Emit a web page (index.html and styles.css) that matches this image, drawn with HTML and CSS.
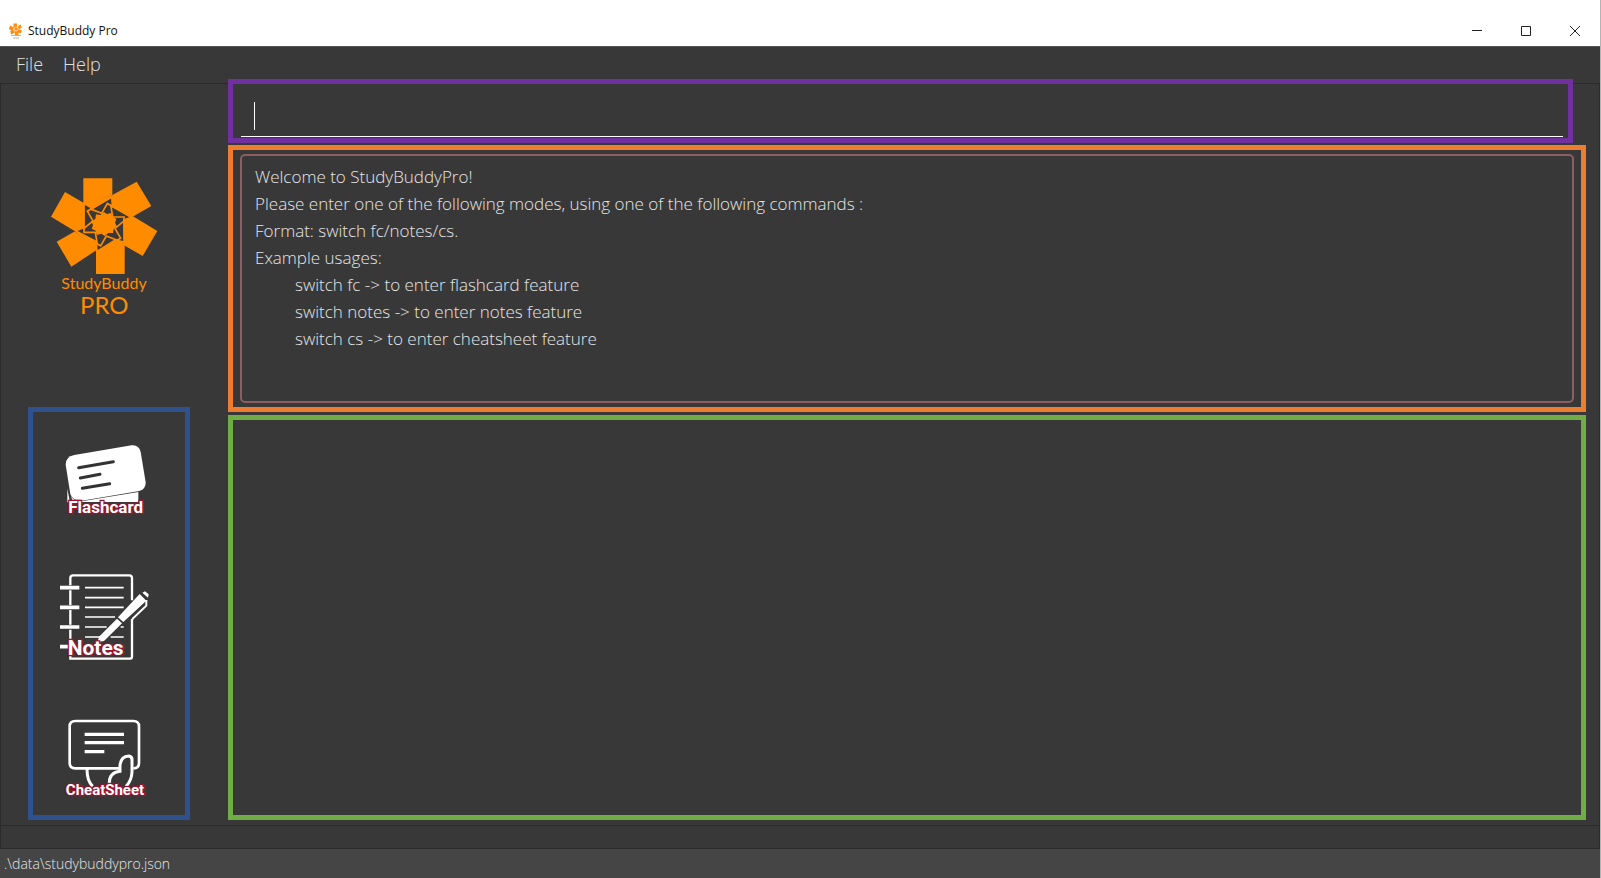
FILE: index.html
```html
<!DOCTYPE html>
<html lang="en">
<head>
<meta charset="utf-8">
<title>StudyBuddy Pro</title>
<link rel="stylesheet" href="styles.css">
</head>
<body>
<div class="window">
  <header class="titlebar">
    <svg class="app-icon" viewBox="0 0 14 16" aria-hidden="true">
      <g fill="#ff8c0a">
        <path d="M4.500 .5h3.500v4h-3.500zM6 8h3.500v4h-3.500zM1 2.500l4 2-2 3.500-3-2zM9 3l2.500-1.500 1.500 3-3.500 2zM9 6l4 1.500-1.500 3-3.500-2zM1 8.500l3.500-2 1.500 3-3.500 2z"/>
        <circle cx="7" cy="6" r="2.500" fill="#f7c48c"/>
        <circle cx="7" cy="6" r="1.300"/>
      </g>
      <path d="M2 12.500h10M4 15h6" stroke="#c9b29a"/>
    </svg>
    <h1 class="title">StudyBuddy Pro</h1>
    <div class="controls">
      <button class="control" aria-label="Minimize"><svg viewBox="0 0 12 12"><path d="M1 5.500h10"/></svg></button>
      <button class="control" aria-label="Maximize"><svg viewBox="0 0 12 12"><path d="M1.500 1.500h9v9h-9z"/></svg></button>
      <button class="control" aria-label="Close"><svg viewBox="0 0 12 12"><path d="M1 1l10 10M11 1L1 11"/></svg></button>
    </div>
  </header>

  <nav class="menubar">
    <button class="menu">File</button>
    <button class="menu">Help</button>
  </nav>

  <div class="body">
    <aside class="sidebar">
      <svg class="logo" viewBox="0 0 390 450" role="img" aria-label="StudyBuddy Pro">
        <g fill="#ff8c00">
          <path d="M130 25H217V76L130 106Z"/>
          <path d="M217 75L290 35L334 108L275 142L217 78Z"/>
          <path d="M279 139L352 183L308 258L252 226V150Z"/>
          <path d="M254 225V312H168V241Z"/>
          <path d="M50 215L105 184L170 240L94 290Z"/>
          <path d="M75 66L133 100V165L105 184L33 140Z"/>
          <path d="M130 103L217 76L277 141L252 170V228L168 242L105 184Z"/>
        </g>
        <path fill="#383838" d="M133 104L158 118L213 84L215 112L272 140L249 148L252 214L226 207L173 240L171 213L113 183L134 174Z"/>
        <g fill="none" stroke="#ff8c00" stroke-width="5">
          <g id="arm"><path d="M132 105V187H166L172 224"/></g>
          <use href="#arm" transform="rotate(60 192 164)"/>
          <use href="#arm" transform="rotate(120 192 164)"/>
          <use href="#arm" transform="rotate(180 192 164)"/>
          <use href="#arm" transform="rotate(240 192 164)"/>
          <use href="#arm" transform="rotate(300 192 164)"/>
        </g>
        <path fill="#ff8c00" d="M192 126L200 132L214 129L217 141L229 146L225 158L230 168L221 176L219 189L205 189L194 198L184 191L170 195L167 182L155 176L159 165L154 154L166 147L168 133L181 135Z"/>
        <text class="logo-name" x="192" y="356">StudyBuddy</text>
        <text class="logo-pro" x="193" y="431">PRO</text>
      </svg>

      <div class="modes">
        <button class="mode">
          <svg viewBox="0 0 270 240" role="img" aria-label="Flashcard">
            <g transform="translate(-120 -110)">
              <path d="M142 262L150 303H142ZM152 285L160 302H355V272L190 299Q160 300 152 285Z" fill="#fff"/>
              <path d="M163 161L335 132Q357 130 362 152L377 243Q378 263 358 269L185 298Q157 298 151 278L137 190Q136 167 163 161Z" fill="#fff"/>
              <path d="M176 199L280 181M181 230L240 219M187 261L269 247" stroke="#333" stroke-width="9" stroke-linecap="round"/>
              <text class="label label-flash" x="257" y="336">Flashcard</text>
            </g>
          </svg>
        </button>
        <button class="mode">
          <svg viewBox="0 0 270 270" role="img" aria-label="Notes">
            <g transform="translate(-120 -35)">
              <path d="M151 75V53Q151 45 159 45H328Q336 45 336 53V120M336 176V289Q336 295 328 295H151V265M151 90V134M151 149V193M151 208V252" fill="none" stroke="#fff" stroke-width="7"/>
              <path d="M120 82H178M120 141H178M120 200H178M120 259H160" stroke="#fff" stroke-width="11"/>
              <path d="M195 82H311M195 112H311M195 141H311M195 170H285M195 200H260M195 230H240M272 230H311M302 200H311" stroke="#fff" stroke-width="5"/>
              <path d="M359 101L379 121L310 185L294 171ZM291 175L306 189L252 242L233 245L237 229ZM367 97L375 93L386 102L384 112Z" fill="#fff"/>
              <path d="M379 119V136L337 176" fill="none" stroke="#fff" stroke-width="6"/>
              <text class="label label-notes" x="227" y="283">Notes</text>
            </g>
          </svg>
        </button>
        <button class="mode">
          <svg viewBox="0 0 270 250" role="img" aria-label="CheatSheet">
            <g transform="translate(-120 -50)">
              <path d="M300 204H166Q149 204 149 188V78Q149 62 166 62H340Q357 62 357 78V188Q357 204 340 204" fill="none" stroke="#fff" stroke-width="8"/>
              <path d="M194 102H312M194 127H312M194 154H253" stroke="#fff" stroke-width="10"/>
              <path d="M201 206Q201 242 218 258M268 250Q267 217 300 213V195Q303 168 326 167Q337 168 336 180V215Q335 241 318 258" fill="none" stroke="#fff" stroke-width="9"/>
              <text class="label label-cheat" x="255" y="285">CheatSheet</text>
            </g>
          </svg>
        </button>
      </div>
    </aside>

    <main class="content">
      <div class="command">
        <input class="command-input" type="text" aria-label="Command">
        <span class="caret"></span>
      </div>
      <section class="result">
        <div class="result-text">
          <p>Welcome to StudyBuddyPro!</p>
          <p>Please enter one of the following modes, using one of the following commands :</p>
          <p>Format: switch fc/notes/cs.</p>
          <p>Example usages:</p>
          <p class="indent">switch fc -&gt; to enter flashcard feature</p>
          <p class="indent">switch notes -&gt; to enter notes feature</p>
          <p class="indent">switch cs -&gt; to enter cheatsheet feature</p>
        </div>
      </section>
      <section class="panel"></section>
    </main>
  </div>

  <div class="strip"></div>
  <footer class="status">.\data\studybuddypro.json</footer>
</div>
</body>
</html>
```

FILE: styles.css
```css
* { box-sizing: border-box; }

body {
  margin: 0;
  background: #383838;
  font-family: "Open Sans", "Noto Sans", sans-serif;
}

button {
  border: 0;
  padding: 0;
  background: none;
  font: inherit;
  color: inherit;
}

.window {
  display: flex;
  flex-direction: column;
  min-height: 100vh;
  border-right: 1px solid #b4b4b4;
}

.titlebar {
  display: flex;
  align-items: center;
  height: 46px;
  padding: 15px 1px 0 9px;
  background: #fff;
}

.app-icon { width: 14px; height: 16px; margin-right: 5px; }

.title {
  flex: 1;
  margin: 0;
  font-size: 12px;
  font-weight: 400;
  color: #111;
}

.controls { display: flex; }

.control {
  display: flex;
  align-items: center;
  justify-content: center;
  width: 49px;
  height: 30px;
}

.control svg {
  width: 12px;
  height: 12px;
  fill: none;
  stroke: #222;
}

.menubar {
  display: flex;
  gap: 20px;
  height: 37px;
  padding: 0 16px 2px;
  border-top: 1px solid #555;
  font-size: 18px;
  font-weight: 300;
  color: #e0e0e0;
}

.body {
  display: flex;
  flex: 1;
  padding: 0 13px 5px 0;
  border: 1px solid #2b2b2b;
  border-bottom-width: 0;
}

.sidebar {
  display: flex;
  flex-direction: column;
  flex: none;
  width: 227px;
  padding: 86px 38px 0 27px;
}

.logo { width: 130px; height: 150px; margin-left: 12px; }

.logo text {
  fill: #ff8c00;
  font-family: Lato, sans-serif;
  text-anchor: middle;
}

.logo-name { font-size: 48px; }
.logo-pro { font-size: 72px; }

.modes {
  display: flex;
  flex-direction: column;
  flex: 1;
  justify-content: space-between;
  margin-top: 87px;
  padding: 26px 27px 15px;
  border: 5px solid #2f528f;
}

.mode { display: block; }
.mode svg { display: block; width: 90px; overflow: visible; }

.label {
  font-family: Roboto, sans-serif;
  font-weight: 700;
  text-anchor: middle;
  fill: #fff;
  stroke: #96142d;
  stroke-width: 8px;
  paint-order: stroke;
}

.label-flash { font-size: 51px; }
.label-notes { font-size: 63px; }
.label-cheat { font-size: 45px; }

.content {
  display: flex;
  flex-direction: column;
  flex: 1;
}

.command {
  position: relative;
  height: 64px;
  margin: -5px 13px 2px 0;
  padding: 8px 5px 1px 8px;
  border: 5px solid #7030a0;
  background: #383838;
}

.command-input {
  display: block;
  width: 100%;
  height: 45px;
  padding: 0 12px;
  border: 0;
  border-bottom: 1px solid #fff;
  outline: 0;
  background: transparent;
  font: 300 18px "Open Sans", sans-serif;
  color: #fff;
}

.caret {
  position: absolute;
  top: 18px;
  left: 21px;
  width: 1px;
  height: 28px;
  background: #fff;
}

.result {
  display: flex;
  min-height: 267px;
  margin-bottom: 3px;
  padding: 4px 7px;
  border: 5px solid #ed7d31;
}

.result-text {
  flex: 1;
  padding: 7px 13px;
  border: 2px solid #8b5f62;
  border-radius: 5px;
  font-size: 17px;
  font-weight: 300;
  line-height: 27px;
  color: #e6e6e6;
}

.result-text p { margin: 0; }
.result-text .indent { padding-left: 40px; }

.panel {
  flex: 1;
  border: 5px solid #70ad47;
}

.strip {
  height: 24px;
  border: 1px solid #2b2b2b;
}

.status {
  height: 29px;
  padding-left: 4px;
  background: #454545;
  font-size: 14px;
  font-weight: 300;
  line-height: 30px;
  color: #e6e6e6;
}
```
